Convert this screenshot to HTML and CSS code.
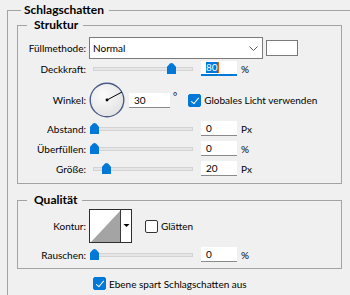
FILE: index.html
```html
<!DOCTYPE html>
<html lang="de">
<head>
  <meta charset="UTF-8" />
  <title>Ebenenstil - Schlagschatten</title>
  <link rel="stylesheet" href="styles.css">
</head>
<body>
  <div class="panel">
    <fieldset class="group group-outer">
      <legend>Schlagschatten</legend>

      <fieldset class="group group-inner">
        <legend>Struktur</legend>

        <div class="row row-blend">
          <span class="row-label">Füllmethode:</span>
          <div class="select">
            <span>Normal</span>
            <svg width="9" height="5" viewBox="0 0 9 5"><polyline points="0.5,0.5 4.5,4.5 8.5,0.5" fill="none" stroke="#5c5c5c" /></svg>
          </div>
          <span class="swatch"></span>
        </div>

        <div class="row row-opacity">
          <span class="row-label">Deckkraft:</span>
          <div class="slider"><span class="track"></span><span class="thumb" style="left: 78px"></span></div>
          <span class="field field-focus"><span class="selected">80</span><span class="caret"></span></span>
          <span class="unit">%</span>
        </div>

        <div class="row row-angle">
          <span class="row-label">Winkel:</span>
          <svg class="dial" width="36" height="36" viewBox="0 0 36 36">
            <defs>
              <radialGradient id="dialFill" cx="40%" cy="35%" r="70%">
                <stop offset="0" stop-color="#fbfbfb" />
                <stop offset="1" stop-color="#e2e2e2" />
              </radialGradient>
            </defs>
            <circle cx="18" cy="18" r="16.8" fill="url(#dialFill)" stroke="#4b5b89" stroke-width="1.4" />
            <line x1="18" y1="18" x2="33" y2="10" stroke="#000" stroke-width="1" />
            <circle cx="18" cy="18" r="1.4" fill="#000" />
          </svg>
          <span class="field field-angle">30</span>
          <span class="degree">°</span>
          <span class="check on"></span>
          <span class="check-text">Globales Licht verwenden</span>
        </div>

        <div class="row row-distance">
          <span class="row-label">Abstand:</span>
          <div class="slider"><span class="track"></span><span class="thumb" style="left: 1px"></span></div>
          <span class="field">0</span>
          <span class="unit">Px</span>
        </div>

        <div class="row">
          <span class="row-label">Überfüllen:</span>
          <div class="slider"><span class="track"></span><span class="thumb" style="left: 1px"></span></div>
          <span class="field">0</span>
          <span class="unit">%</span>
        </div>

        <div class="row">
          <span class="row-label">Größe:</span>
          <div class="slider"><span class="track"></span><span class="thumb" style="left: 13px"></span></div>
          <span class="field">20</span>
          <span class="unit">Px</span>
        </div>
      </fieldset>

      <fieldset class="group group-inner group-quality">
        <legend>Qualität</legend>

        <div class="row row-contour">
          <span class="row-label">Kontur:</span>
          <svg class="contour" width="43" height="34" viewBox="0 0 43 34">
            <rect x="0.5" y="0.5" width="42" height="33" fill="#fff" stroke="#2e2e2e" />
            <polygon points="2,33 31,2 31,33" fill="#a4a4a4" />
            <line x1="31.5" y1="1" x2="31.5" y2="33" stroke="#3a3a3a" />
            <polygon points="34.5,15 40.5,15 37.5,18" fill="#000" />
          </svg>
          <span class="check check-smooth"></span>
          <span class="check-text">Glätten</span>
        </div>

        <div class="row row-noise">
          <span class="row-label">Rauschen:</span>
          <div class="slider"><span class="track"></span><span class="thumb" style="left: 1px"></span></div>
          <span class="field">0</span>
          <span class="unit">%</span>
        </div>
      </fieldset>

      <div class="row row-knockout">
        <span class="check on"></span>
        <span class="check-text">Ebene spart Schlagschatten aus</span>
      </div>
    </fieldset>
  </div>
</body>
</html>
```

FILE: styles.css
```css
* {
  margin: 0;
  padding: 0;
  box-sizing: border-box;
}
html, body {
  height: 100%;
  overflow: hidden;
}
body {
  background: #f0f0f0;
  font-family: Lato, 'Liberation Sans', sans-serif;
  font-size: 10px;
  color: #000;
}
.panel {
  height: 100%;
  padding: 3px 0 0 7px;
}
.group {
  border: 1px solid #a3a3a3;
  min-width: 0;
}
.group legend {
  font-weight: bold;
  font-size: 12px;
  line-height: 14px;
}
.group-outer {
  border-right: 0;
  border-bottom: 0;
  padding: 1px 0 0 9px;
  height: 100%;
}
.group-outer > legend {
  margin-left: 4px;
  padding: 0 5px 0 3px;
}
.group-inner {
  width: 325px;
  padding: 5px 0 7px;
}
.group-inner > legend {
  margin-left: 9px;
  padding: 0 5px 0 7px;
}
.group-quality {
  margin-top: 9px;
  padding: 2px 0 6px;
}
.row {
  display: flex;
  align-items: center;
  height: 15px;
  margin-top: 5px;
}
.row-blend {
  height: 22px;
  margin-top: 0;
}
.row-opacity {
  margin-top: 2px;
}
.row-angle {
  height: 36px;
  margin-top: 6px;
}
.row-distance {
  margin-top: 3px;
}
.row-contour {
  height: 34px;
  margin-top: 0;
}
.row-noise {
  margin-top: 4px;
}
.row-knockout {
  margin-top: 7px;
  padding-left: 76px;
}
.row-label {
  width: 68px;
  margin-right: 3px;
  text-align: right;
  white-space: nowrap;
}
.select {
  width: 174px;
  height: 22px;
  background: #fff;
  border: 1px solid #7a7a7a;
  display: flex;
  align-items: center;
  justify-content: space-between;
  padding: 0 4px 0 3px;
}
.swatch {
  width: 32px;
  height: 16px;
  margin-left: 3px;
  background: #fff;
  border: 1px solid #7a7a7a;
}
.slider {
  position: relative;
  width: 104px;
  height: 15px;
  display: flex;
  align-items: center;
  padding-left: 4px;
}
.track {
  flex: 1;
  height: 4px;
  background: #e6e6e6;
  border: 1px solid #d3d3d3;
}
.thumb {
  position: absolute;
  top: 2px;
  width: 9px;
  height: 11px;
  background: #0078d7;
  clip-path: polygon(0 34%, 33% 4%, 50% 0, 67% 4%, 100% 34%, 100% 100%, 0 100%);
}
.field {
  width: 36px;
  height: 15px;
  margin-left: 8px;
  padding-left: 5px;
  background: #fff;
  border-bottom: 1px solid #8a8a8a;
  line-height: 14px;
  display: flex;
  align-items: center;
}
.field-focus {
  border-bottom: 2px solid #0078d7;
}
.selected {
  background: #0078d7;
  color: #fff;
  line-height: 11px;
}
.caret {
  width: 1px;
  height: 11px;
  background: #e8590c;
}
.field-angle {
  width: 41px;
  margin-left: 4px;
}
.dial {
  display: block;
}
.unit {
  margin-left: 4px;
}
.degree {
  margin-left: 3px;
  align-self: flex-start;
  margin-top: 8px;
}
.check {
  position: relative;
  width: 13px;
  height: 13px;
  border: 1px solid #333;
  border-radius: 2px;
  background: #fff;
  margin-left: 11px;
}
.check.on {
  background: #0078d7;
  border-color: #0078d7;
}
.check.on::after {
  content: '';
  position: absolute;
  left: 4px;
  top: 1px;
  width: 3px;
  height: 7px;
  border: solid #fff;
  border-width: 0 1px 1px 0;
  transform: rotate(40deg);
}
.row-knockout .check {
  margin-left: 0;
}
.check-smooth {
  margin-left: 13px;
}
.check-text {
  margin-left: 3px;
  white-space: nowrap;
}
```
